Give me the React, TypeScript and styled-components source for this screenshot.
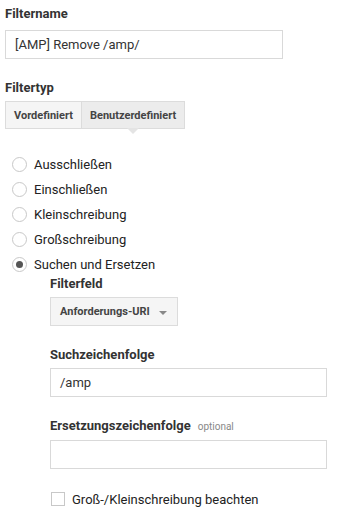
import React from "react";
import styled, { createGlobalStyle } from "styled-components";

const Global = createGlobalStyle`
  body { margin: 0; background: #fff; font-family: Roboto, "Liberation Sans", Arial, sans-serif; }
  * { box-sizing: border-box; }
`;

const Page = styled.div`
  padding: 6px 0 0 5px;
  display: flex;
  flex-direction: column;
  width: 354px;
`;

const Label = styled.div<{ $top?: number; $bottom?: number }>`
  font-size: 13px;
  font-weight: 700;
  color: #333;
  line-height: 16px;
  margin-top: ${(p) => p.$top ?? 0}px;
  margin-bottom: ${(p) => p.$bottom ?? 5}px;
`;

const Optional = styled.span`
  font-weight: 400;
  font-size: 10px;
  color: #888;
  margin-left: 7px;
`;

const TextInput = styled.div<{ $w: number }>`
  width: ${(p) => p.$w}px;
  height: 29px;
  border: 1px solid #d9d9d9;
  padding: 0 9px;
  display: flex;
  align-items: center;
  font-size: 13px;
  color: #333;
`;

const Tabs = styled.div`
  display: flex;
`;

const Tab = styled.div<{ $active?: boolean }>`
  position: relative;
  height: 28px;
  padding: 0 8px;
  display: flex;
  align-items: center;
  font-size: 11px;
  font-weight: 700;
  color: #444;
  background: ${(p) => (p.$active ? "#ececec" : "#f5f5f5")};
  border: 1px solid #dcdcdc;
  & + & { border-left: none; }
  ${(p) =>
    p.$active
      ? `&::after {
    content: "";
    position: absolute;
    left: 50%;
    bottom: -6px;
    margin-left: -6px;
    border-left: 6px solid transparent;
    border-right: 6px solid transparent;
    border-top: 6px solid #e4e4e4;
  }`
      : ""}
`;

const Radios = styled.div`
  display: flex;
  flex-direction: column;
  gap: 9px;
  margin-top: 27px;
  padding-left: 7px;
`;

const RadioRow = styled.div`
  display: flex;
  align-items: center;
  gap: 7px;
  font-size: 13px;
  color: #222;
  height: 16px;
`;

const RadioDot = styled.span<{ $on?: boolean }>`
  width: 15px;
  height: 15px;
  border-radius: 50%;
  border: 1px solid #c8c8c8;
  background: #fff;
  display: flex;
  align-items: center;
  justify-content: center;
  &::after {
    content: "";
    width: 7px;
    height: 7px;
    border-radius: 50%;
    background: ${(p) => (p.$on ? "#555" : "transparent")};
  }
`;

const Sub = styled.div`
  padding-left: 45px;
  display: flex;
  flex-direction: column;
  margin-top: 4px;
`;

const Select = styled.div`
  width: 128px;
  height: 29px;
  background: #f5f5f5;
  border: 1px solid #dcdcdc;
  display: flex;
  align-items: center;
  justify-content: space-between;
  padding: 0 10px 0 9px;
  font-size: 11px;
  font-weight: 700;
  color: #444;
`;

const Caret = styled.span`
  border-left: 4px solid transparent;
  border-right: 4px solid transparent;
  border-top: 4px solid #888;
  margin-top: 2px;
`;

const CheckRow = styled.div`
  display: flex;
  align-items: center;
  gap: 7px;
  height: 16px;
  margin-top: 22px;
  padding-left: 1px;
  font-size: 13px;
  color: #222;
`;

const Box = styled.span`
  width: 14px;
  height: 14px;
  border: 1px solid #c8c8c8;
  background: #fff;
`;

const radios = ["Ausschließen", "Einschließen", "Kleinschreibung", "Großschreibung", "Suchen und Ersetzen"];

export default function App() {
  return (
    <>
      <Global />
      <Page>
        <Label $bottom={8}>Filtername</Label>
        <TextInput $w={278}>[AMP] Remove /amp/</TextInput>
        <Label $top={21}>Filtertyp</Label>
        <Tabs>
          <Tab>Vordefiniert</Tab>
          <Tab $active>Benutzerdefiniert</Tab>
        </Tabs>
        <Radios>
          {radios.map((r, i) => (
            <RadioRow key={r}>
              <RadioDot $on={i === 4} />
              {r}
            </RadioRow>
          ))}
        </Radios>
        <Sub>
          <Label>Filterfeld</Label>
          <Select>
            Anforderungs-URI
            <Caret />
          </Select>
          <Label $top={21}>Suchzeichenfolge</Label>
          <TextInput $w={277}>/amp</TextInput>
          <Label $top={21}>
            Ersetzungszeichenfolge<Optional>optional</Optional>
          </Label>
          <TextInput $w={277} />
          <CheckRow>
            <Box />
            Groß-/Kleinschreibung beachten
          </CheckRow>
        </Sub>
      </Page>
    </>
  );
}
